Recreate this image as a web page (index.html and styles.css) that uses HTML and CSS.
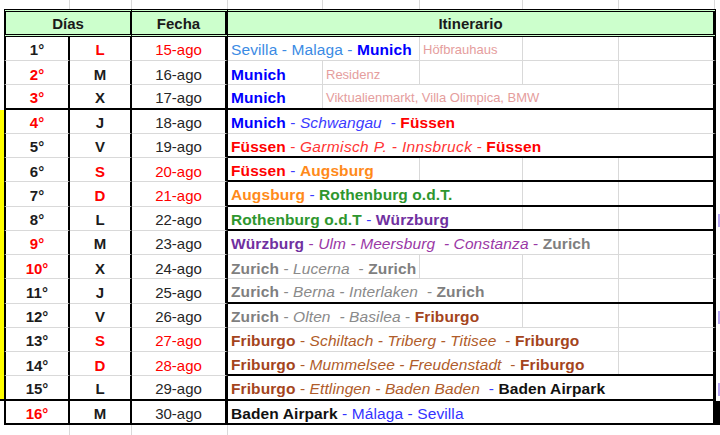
FILE: index.html
```html
<!DOCTYPE html>
<html lang="es">
<head>
<meta charset="utf-8">
<title>Itinerario</title>
<link rel="stylesheet" href="styles.css">
</head>
<body>
<div class="sheet">
  <div class="row strip">
    <div class="gut"></div><div class="g gl"></div><div class="g gl"></div><div class="g gl"></div>
    <div class="g it-g"><div class="sc s1 v"></div><div class="sc s2 v"></div><div class="sc s3 v"></div><div class="sc s4 v"></div><div class="sc s5 v"></div></div>
    <div class="out"></div>
  </div>

  <div class="row hdr">
    <div class="gut"></div>
    <div class="h hab">Días</div>
    <div class="h hf">Fecha</div>
    <div class="h hi">Itinerario</div>
    <div class="out"></div>
  </div>

  <div class="row">
    <div class="gut"></div><div class="c a">1°</div><div class="c b red">L</div><div class="c f red">15-ago</div>
    <div class="it"><div class="sc s1"><span class="lbl">Sevilla - Malaga - </span><b class="blu">Munich</b></div><div class="sc s2 v"></div><div class="sc s3 v"><span class="note">Höfbrauhaus</span></div><div class="sc s4 v"></div><div class="sc s5"></div></div>
    <div class="out"></div>
  </div>

  <div class="row">
    <div class="gut"></div><div class="c a red">2°</div><div class="c b">M</div><div class="c f">16-ago</div>
    <div class="it"><div class="sc s1 v"><b class="blu">Munich</b></div><div class="sc s2 v"><span class="note">Residenz</span></div><div class="sc s3 v"></div><div class="sc s4 v"></div><div class="sc s5"></div></div>
    <div class="out"></div>
  </div>

  <div class="row tk">
    <div class="gut"></div><div class="c a red">3°</div><div class="c b">X</div><div class="c f">17-ago</div>
    <div class="it"><div class="sc s1 v"><b class="blu">Munich</b></div><div class="sc s2"><span class="note">Viktualienmarkt, Villa Olimpica, BMW</span></div><div class="sc s3"></div><div class="sc s4 v"></div><div class="sc s5"></div></div>
    <div class="out"></div>
  </div>

  <div class="row">
    <div class="gut y"></div><div class="c a red">4°</div><div class="c b">J</div><div class="c f">18-ago</div>
    <div class="it"><div class="sc s1"><b class="blu">Munich</b><span class="ibl"> - </span><i class="ibl">Schwangau</i><span class="ibl">  - </span><b class="red">Füssen</b></div><div class="sc s2"></div><div class="sc s3"></div><div class="sc s4"></div><div class="sc s5"></div></div>
    <div class="out"></div>
  </div>

  <div class="row">
    <div class="gut y"></div><div class="c a">5°</div><div class="c b">V</div><div class="c f">19-ago</div>
    <div class="it tk2"><div class="sc s1"><b class="red">Füssen</b><span class="ird"> - </span><i class="ird wide">Garmisch P. - Innsbruck</i><span class="ird"> - </span><b class="red">Füssen</b></div><div class="sc s2"></div><div class="sc s3"></div><div class="sc s4"></div><div class="sc s5"></div></div>
    <div class="out"></div>
  </div>

  <div class="row">
    <div class="gut y"></div><div class="c a">6°</div><div class="c b red">S</div><div class="c f red">20-ago</div>
    <div class="it tk2"><div class="sc s1"><b class="red">Füssen</b><span class="ibl"> - </span><b class="org">Augsburg</b></div><div class="sc s2 v"></div><div class="sc s3 v"></div><div class="sc s4 v"></div><div class="sc s5"></div></div>
    <div class="out"></div>
  </div>

  <div class="row">
    <div class="gut y"></div><div class="c a">7°</div><div class="c b red">D</div><div class="c f red">21-ago</div>
    <div class="it tk2"><div class="sc s1"><b class="org">Augsburg</b><span class="ibl"> - </span><b class="grn">Rothenburg o.d.T.</b></div><div class="sc s2"></div><div class="sc s3 v"></div><div class="sc s4 v"></div><div class="sc s5"></div></div>
    <div class="out"></div>
  </div>

  <div class="row">
    <div class="gut y"></div><div class="c a">8°</div><div class="c b">L</div><div class="c f">22-ago</div>
    <div class="it tk2"><div class="sc s1"><b class="grn">Rothenburg o.d.T</b><span class="ibl"> - </span><b class="pur">Würzburg</b></div><div class="sc s2"></div><div class="sc s3 v"></div><div class="sc s4 v"></div><div class="sc s5"></div></div>
    <div class="out mk"></div>
  </div>

  <div class="row">
    <div class="gut y"></div><div class="c a red">9°</div><div class="c b">M</div><div class="c f">23-ago</div>
    <div class="it"><div class="sc s1"><b class="pur">Würzburg</b><span class="ipu"> - </span><i class="ipu">Ulm - Meersburg  - Constanza</i><span class="ipu"> - </span><span class="gry">Zurich</span></div><div class="sc s2"></div><div class="sc s3"></div><div class="sc s4 v"></div><div class="sc s5"></div></div>
    <div class="out"></div>
  </div>

  <div class="row">
    <div class="gut y"></div><div class="c a red">10°</div><div class="c b">X</div><div class="c f">24-ago</div>
    <div class="it"><div class="sc s1"><b class="gry">Zurich</b><span class="igy"> - </span><i class="igy">Lucerna</i><span class="igy">  - </span><b class="gry">Zurich</b></div><div class="sc s2 v"></div><div class="sc s3 v"></div><div class="sc s4 v"></div><div class="sc s5"></div></div>
    <div class="out"></div>
  </div>

  <div class="row">
    <div class="gut y"></div><div class="c a">11°</div><div class="c b">J</div><div class="c f">25-ago</div>
    <div class="it tk2"><div class="sc s1"><b class="gry">Zurich</b><span class="igy"> - </span><i class="igy">Berna - Interlaken</i><span class="igy">  - </span><b class="gry">Zurich</b></div><div class="sc s2"></div><div class="sc s3 v"></div><div class="sc s4 v"></div><div class="sc s5"></div></div>
    <div class="out"></div>
  </div>

  <div class="row">
    <div class="gut y"></div><div class="c a">12°</div><div class="c b">V</div><div class="c f">26-ago</div>
    <div class="it"><div class="sc s1"><span class="gry">Zurich</span><span class="igy"> - </span><i class="igy">Olten  - Basilea</i><span class="igy"> - </span><b class="brn">Friburgo</b></div><div class="sc s2"></div><div class="sc s3 v"></div><div class="sc s4 v"></div><div class="sc s5"></div></div>
    <div class="out mk"></div>
  </div>

  <div class="row">
    <div class="gut y"></div><div class="c a">13°</div><div class="c b red">S</div><div class="c f red">27-ago</div>
    <div class="it"><div class="sc s1"><b class="brn">Friburgo</b><span class="ibr"> - </span><i class="ibr">Schiltach - Triberg - Titisee</i><span class="ibr">  - </span><b class="brn">Friburgo</b></div><div class="sc s2"></div><div class="sc s3"></div><div class="sc s4 v"></div><div class="sc s5"></div></div>
    <div class="out"></div>
  </div>

  <div class="row">
    <div class="gut y"></div><div class="c a">14°</div><div class="c b red">D</div><div class="c f red">28-ago</div>
    <div class="it tk2"><div class="sc s1"><b class="brn">Friburgo</b><span class="ibr"> - </span><i class="ibr">Mummelsee - Freudenstadt</i><span class="ibr">  - </span><b class="brn">Friburgo</b></div><div class="sc s2"></div><div class="sc s3"></div><div class="sc s4 v"></div><div class="sc s5"></div></div>
    <div class="out"></div>
  </div>

  <div class="row tk">
    <div class="gut y"></div><div class="c a">15°</div><div class="c b">L</div><div class="c f">29-ago</div>
    <div class="it"><div class="sc s1"><b class="brn">Friburgo</b><span class="ibr"> - </span><i class="ibr">Ettlingen - Baden Baden</i><span class="ibl">  - </span><b class="blk">Baden Airpark</b></div><div class="sc s2"></div><div class="sc s3"></div><div class="sc s4"></div><div class="sc s5"></div></div>
    <div class="out mk"></div>
  </div>

  <div class="row tk">
    <div class="gut"></div><div class="c a red">16°</div><div class="c b">M</div><div class="c f">30-ago</div>
    <div class="it"><div class="sc s1"><b class="blk">Baden Airpark</b><span class="rbl"> - Málaga - Sevilla</span></div><div class="sc s2"></div><div class="sc s3"></div><div class="sc s4"></div><div class="sc s5"></div></div>
    <div class="out dark"></div>
  </div>

  <div class="row strip bottom">
    <div class="gut"></div><div class="g gl"></div><div class="g gl"></div><div class="g gl"></div>
    <div class="g"></div>
    <div class="out"></div>
  </div>
</div>
</body>
</html>
```

FILE: styles.css
```css
* { box-sizing: border-box; }

html, body {
  margin: 0;
  padding: 0;
  background: #fff;
}

body {
  width: 720px;
  height: 435px;
  overflow: hidden;
  font-family: "Liberation Sans", Arial, sans-serif;
  font-size: 15px;
  color: #1c1c1c;
}

.sheet {
  display: flex;
  flex-direction: column;
}

.row {
  display: grid;
  grid-template-columns: 4px 66px 62px 96px 488px 4px;
  height: 24.25px;
}

.strip { height: 9px; }
.strip.bottom { height: 12px; }
.hdr { height: 27.75px; }

/* gridline strips above / below the table */
.g { border-right: 1px solid transparent; }
.gl { border-right-color: #d9d9d9; }
.it-g { display: flex; }
.it-g .sc { padding: 0; }

/* header */
.h {
  display: flex;
  align-items: center;
  justify-content: center;
  padding-top: 2px;
  background: #ccffcc;
  border-top: 3px double #000;
  border-bottom: 3px double #000;
  font-weight: bold;
  line-height: 17px;
  color: #1a1a1a;
}
.hab { grid-column: 2 / 4; border-left: 2px solid #000; border-right: 2px solid #000; }
.hf { border-right: 3px solid #000; }
.hi { border-right: 3px solid #000; }

/* body cells */
.c {
  display: flex;
  align-items: center;
  justify-content: center;
  padding-top: 3px;
  line-height: 17px;
  border-bottom: 1px solid #d9d9d9;
  white-space: nowrap;
}
.a { border-left: 2px solid #000; border-right: 2px solid #000; font-weight: bold; }
.b { border-right: 2px solid #000; font-weight: bold; }
.f { border-right: 3px solid #000; color: #262626; }

.it {
  display: flex;
  border-right: 3px solid #000;
  border-bottom: 1px solid #d9d9d9;
}

.tk .c, .tk .it, .it.tk2 { border-bottom: 2px solid #000; }
.tk .gut.y { border-bottom: 2px solid #000; }

.sc {
  flex: none;
  display: flex;
  align-items: center;
  padding: 3px 0 0 3px;
  line-height: 17px;
  white-space: pre;
  border-right: 1px solid transparent;
  min-width: 0;
  font-size: 15.5px;
  letter-spacing: 0.1px;
}
.s1 { width: 95px; }
.s2 { width: 97px; }
.s3 { width: 103px; }
.s4 { width: 96px; }
.s5 { flex: 1; border-right: 0; }
.sc.v { border-right-color: #d9d9d9; }
.it-g .s5.v { border-right: 1px solid #d9d9d9; }

.sc > * { flex: none; }
.wide { letter-spacing: 0.35px; }

.gut.y { background: #ffff00; }

.out.mk { display: flex; align-items: center; justify-content: flex-end; padding-top: 3px; }
.out.mk::after { content: ""; width: 2px; height: 13px; background: #b7a6f2; }
.out.dark { background: #000; }

/* text colours */
.red { color: #ff0000; }
.note { font-size: 13px; letter-spacing: 0; color: #e59d9d; }
.lbl { color: #3b8be4; }
.blu { color: #0000ff; }
.ibl { color: #3b3bff; }
.ird { color: #ff3535; }
.org { color: #ff8a1a; }
.grn { color: #2e962e; }
.pur { color: #7030a0; }
.ipu { color: #9a38a6; }
.gry { color: #7f7f7f; font-weight: bold; }
.igy { color: #8a8a8a; }
.brn { color: #a4441c; }
.ibr { color: #b05c2a; }
.blk { color: #111; }
.rbl { color: #3333ff; }
```
